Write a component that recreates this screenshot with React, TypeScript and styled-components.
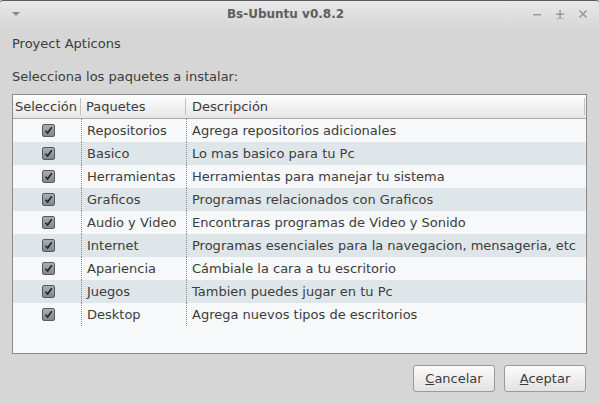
import React from "react";
import styled, { createGlobalStyle } from "styled-components";

const Global = createGlobalStyle`
  html, body { margin: 0; padding: 0; }
  body {
    width: 599px; height: 404px; overflow: hidden;
    background: #d6d6d6;
    font-family: "DejaVu Sans", "Liberation Sans", sans-serif;
    color: #3c3c3c;
  }
`;

const Window = styled.div`
  width: 599px;
  height: 404px;
  display: flex;
  flex-direction: column;
  background: #d6d6d6;
`;

const TitleBar = styled.div`
  height: 25px;
  border-top: 1px solid #5c5c5c;
  border-radius: 3px 3px 0 0;
  background: linear-gradient(#e8e8e8, #d8d8d8);
  display: flex;
  align-items: center;
  padding: 0 11px 0 11px;
  position: relative;
`;

const Title = styled.div`
  position: absolute;
  left: 0; right: 0; top: 0; bottom: 0;
  padding-right: 28px;
  display: flex;
  align-items: center;
  justify-content: center;
  font-weight: bold;
  font-size: 12px;
  color: #5e5e5e;
  pointer-events: none;
`;

const Controls = styled.div`
  margin-left: auto;
  display: flex;
  gap: 13px;
  align-items: center;
`;

const Content = styled.div`
  flex: 1;
  display: flex;
  flex-direction: column;
  padding: 10px 12px 12px 12px;
`;

const Label = styled.div<{ $mt?: number }>`
  font-size: 13px;
  line-height: 16px;
  margin-top: ${(p) => p.$mt ?? 0}px;
  color: #3c3c3c;
`;

const Table = styled.div`
  margin-top: 9px;
  height: 260px;
  box-sizing: border-box;
  border: 1px solid #8a8a8a;
  background: #f6f8fa;
  display: flex;
  flex-direction: column;
`;

const cols = "68px 105px 1fr";

const HeaderRow = styled.div`
  height: 24px;
  display: grid;
  grid-template-columns: ${cols};
  background: linear-gradient(#fdfdfd, #e6e6e6);
  border-bottom: 1px solid #a9a9a9;
  box-sizing: border-box;
`;

const HeaderCell = styled.div<{ $last?: boolean; $pl?: number }>`
  font-size: 13px;
  display: flex;
  align-items: center;
  padding-left: ${(p) => p.$pl ?? 2}px;
  position: relative;
  &::after {
    content: "";
    position: absolute;
    right: ${(p) => (p.$last ? 1 : 0)}px;
    top: 3px;
    bottom: 3px;
    width: 1px;
    background: #c2c2c2;
  }
`;

const Row = styled.div<{ $alt: boolean }>`
  height: 23px;
  display: grid;
  grid-template-columns: ${cols};
  background: ${(p) => (p.$alt ? "#dfe6ea" : "#f6f8fa")};
`;

const Cell = styled.div<{ $dotted?: boolean; $center?: boolean }>`
  font-size: 13px;
  display: flex;
  align-items: center;
  justify-content: ${(p) => (p.$center ? "center" : "flex-start")};
  padding-left: ${(p) => (p.$center ? 0 : 5)}px;
  border-left: ${(p) => (p.$dotted ? "1px dotted #8a8a8a" : "none")};
  white-space: nowrap;
  overflow: hidden;
`;

const Check = styled.span`
  width: 11px;
  height: 11px;
  border: 1px solid #555a62;
  border-radius: 2px;
  background: linear-gradient(#a9aeb6, #838890);
  display: flex;
  align-items: center;
  justify-content: center;
  margin-left: 3px;
`;

const Footer = styled.div`
  margin-top: auto;
  display: flex;
  justify-content: flex-end;
  gap: 9px;
  padding-right: 1px;
`;

const Button = styled.button`
  width: 82px;
  height: 27px;
  font-family: "DejaVu Sans", "Liberation Sans", sans-serif;
  font-size: 13px;
  color: #3c3c3c;
  border: 1px solid #9a9a9a;
  border-radius: 3px;
  background: linear-gradient(#fbfbfb, #e2e2e2);
  padding: 0;
  u { text-decoration: underline; }
`;

const rows = [
  ["Repositorios", "Agrega repositorios adicionales"],
  ["Basico", "Lo mas basico para tu Pc"],
  ["Herramientas", "Herramientas para manejar tu sistema"],
  ["Graficos", "Programas relacionados con Graficos"],
  ["Audio y Video", "Encontraras programas de Video y Sonido"],
  ["Internet", "Programas esenciales para la navegacion, mensageria, etc"],
  ["Apariencia", "Cámbiale la cara a tu escritorio"],
  ["Juegos", "Tambien puedes jugar en tu Pc"],
  ["Desktop", "Agrega nuevos tipos de escritorios"],
];

const CheckMark = () => (
  <svg width="9" height="9" viewBox="0 0 9 9">
    <path d="M1.5 4.8 L3.6 7 L7.8 1.2" fill="none" stroke="#222" strokeWidth="1.6" />
  </svg>
);

export default function App() {
  return (
    <>
      <Global />
      <Window>
        <TitleBar>
          <svg width="10" height="6" viewBox="0 0 10 6">
            <path d="M1 1 L9 1 L5 5 Z" fill="#8a8a8a" />
          </svg>
          <Title>Bs-Ubuntu v0.8.2</Title>
          <Controls>
            <svg width="10" height="10" viewBox="0 0 10 10">
              <rect x="1" y="5" width="8" height="1.5" fill="#9a9a9a" />
            </svg>
            <svg width="10" height="10" viewBox="0 0 10 10">
              <rect x="1" y="4.5" width="8" height="1.5" fill="#9a9a9a" />
              <rect x="4.3" y="1" width="1.5" height="8" fill="#9a9a9a" />
              <rect x="1" y="9" width="8" height="1" fill="#b5b5b5" />
            </svg>
            <svg width="10" height="10" viewBox="0 0 10 10">
              <path d="M1.5 1.5 L8.5 8.5 M8.5 1.5 L1.5 8.5" stroke="#9a9a9a" strokeWidth="1.6" />
            </svg>
          </Controls>
        </TitleBar>
        <Content>
          <Label>Proyect Apticons</Label>
          <Label $mt={17}>Selecciona los paquetes a instalar:</Label>
          <Table>
            <HeaderRow>
              <HeaderCell>Selección</HeaderCell>
              <HeaderCell $pl={5}>Paquetes</HeaderCell>
              <HeaderCell $last $pl={6}>Descripción</HeaderCell>
            </HeaderRow>
            {rows.map(([name, desc], i) => (
              <Row key={name} $alt={i % 2 === 1}>
                <Cell $center>
                  <Check>
                    <CheckMark />
                  </Check>
                </Cell>
                <Cell $dotted>{name}</Cell>
                <Cell $dotted>{desc}</Cell>
              </Row>
            ))}
          </Table>
          <Footer>
            <Button>
              <u>C</u>ancelar
            </Button>
            <Button>
              <u>A</u>ceptar
            </Button>
          </Footer>
        </Content>
      </Window>
    </>
  );
}
